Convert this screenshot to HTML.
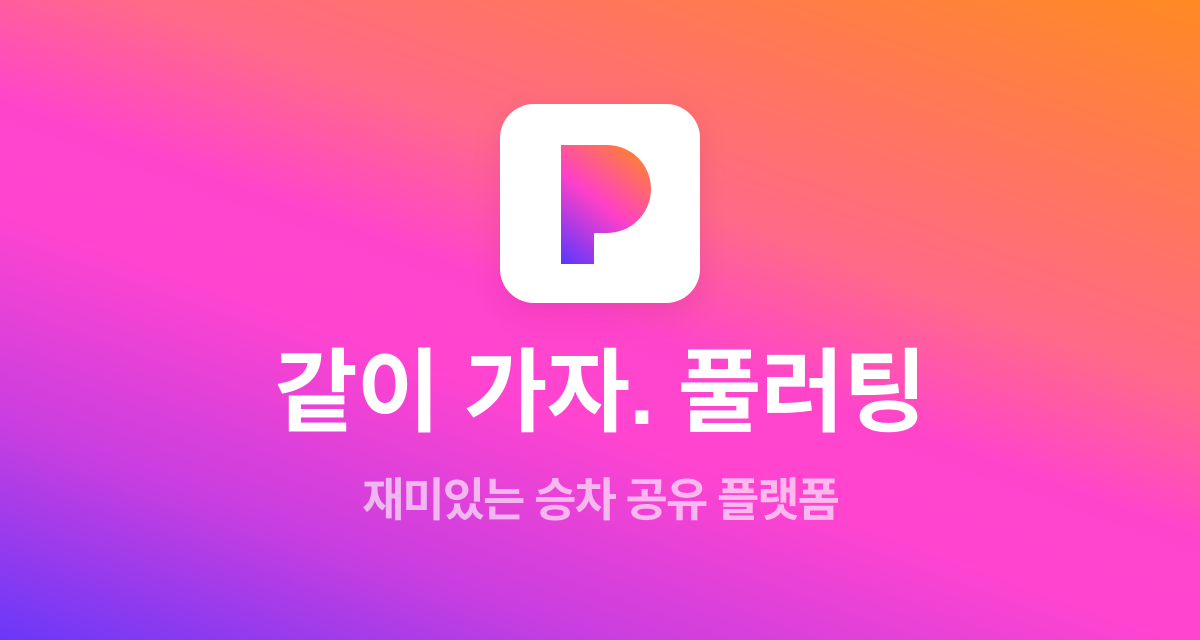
<!DOCTYPE html>
<html><head><meta charset="utf-8"><style>
html,body{margin:0;padding:0}
body{width:1200px;height:640px;overflow:hidden;position:relative;
background:linear-gradient(200deg,#ff8a22 0%,#ff7560 22%,#ff6a88 36%,#ff44cc 50%,#ff44d0 60%,#c83ee0 80%,#6a38f8 100%);
font-family:"Liberation Sans","Noto Sans CJK KR",sans-serif;}
.icon{position:absolute;left:500px;top:104px;width:200px;height:199px;background:#fff;border-radius:34px;box-shadow:0 10px 30px rgba(120,0,80,0.12)}
svg{position:absolute;left:0;top:0}
.t{position:absolute;left:0;width:1200px;text-align:center;font-weight:700;white-space:nowrap}
.t1{top:336px;font-size:91px;line-height:115px;color:#fff;letter-spacing:-1px}
.t2{top:470px;font-size:46px;line-height:60px;color:rgba(255,255,255,0.62);letter-spacing:-2px}
</style></head><body>
<div class="icon"></div>
<svg width="1200" height="640"><defs>
<linearGradient id="g" x1="561" y1="264" x2="651" y2="150" gradientUnits="userSpaceOnUse">
<stop offset="0" stop-color="#5a36ff"/><stop offset="0.5" stop-color="#ff40c8"/><stop offset="1" stop-color="#ff8a1e"/></linearGradient></defs>
<path d="M561 145 H607 A44 44 0 0 1 607 233 H594 V264 H561 Z" fill="url(#g)"/>
</svg>
<div class="t t1">같이 가자. 풀러팅</div>
<div class="t t2">재미있는 승차 공유 플랫폼</div>
</body></html>
